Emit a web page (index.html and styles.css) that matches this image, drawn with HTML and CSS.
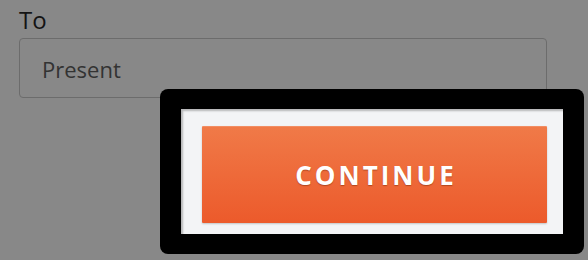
FILE: index.html
```html
<!DOCTYPE html>
<html>
<head>
<meta charset="utf-8">
<link rel="stylesheet" href="styles.css">
</head>
<body>
<div class="page">
  <div class="field">
    <label class="field-label">To</label>
    <div class="field-input">Present</div>
  </div>
  <div class="spotlight">
    <div class="spotlight-inner">
      <button class="continue-btn">CONTINUE</button>
    </div>
  </div>
</div>
</body>
</html>
```
FILE: styles.css
```css
html, body {
  margin: 0;
  padding: 0;
  background: #888888;
  width: 588px;
  height: 260px;
  overflow: hidden;
}
.page {
  position: relative;
  width: 588px;
  height: 260px;
  font-family: "Open Sans", "Liberation Sans", sans-serif;
}
.field {
  display: flex;
  flex-direction: column;
  gap: 4px;
  padding: 6px 41px 0 19px;
}
.field-label {
  font-size: 24px;
  line-height: 28px;
  color: #141414;
}
.field-input {
  box-sizing: border-box;
  height: 60px;
  border: 1px solid #6c6c6c;
  border-radius: 4px;
  padding: 0 22px;
  display: flex;
  align-items: center;
  font-size: 22px;
  line-height: 30px;
  padding-top: 1px;
  color: #333333;
}
.spotlight {
  position: absolute;
  left: 160px;
  top: 89px;
  width: 424px;
  height: 165px;
  box-sizing: border-box;
  background: #000;
  border-radius: 8px;
  padding: 20px 21px 20px 21px;
  display: flex;
}
.spotlight-inner {
  flex: 1;
  background: #f3f4f6;
  box-shadow: inset 2px 2px 2px rgba(0,0,0,0.25);
  padding: 17px 16px 11px 21px;
  display: flex;
}
.continue-btn {
  flex: 1;
  border: none;
  border-radius: 1px;
  margin: 0;
  padding: 0;
  background: linear-gradient(#f07a48, #ec5a2b);
  box-shadow: 0 1px 2px rgba(0,0,0,0.2), inset 0 1px 0 rgba(255,255,255,0.15);
  color: #ffffff;
  font-family: "Open Sans", "Liberation Sans", sans-serif;
  font-weight: 700;
  font-size: 26px;
  letter-spacing: 3px;
  text-indent: 3px;
  text-shadow: 0 1px 1px rgba(120,40,10,0.5);
  cursor: pointer;
}
```
